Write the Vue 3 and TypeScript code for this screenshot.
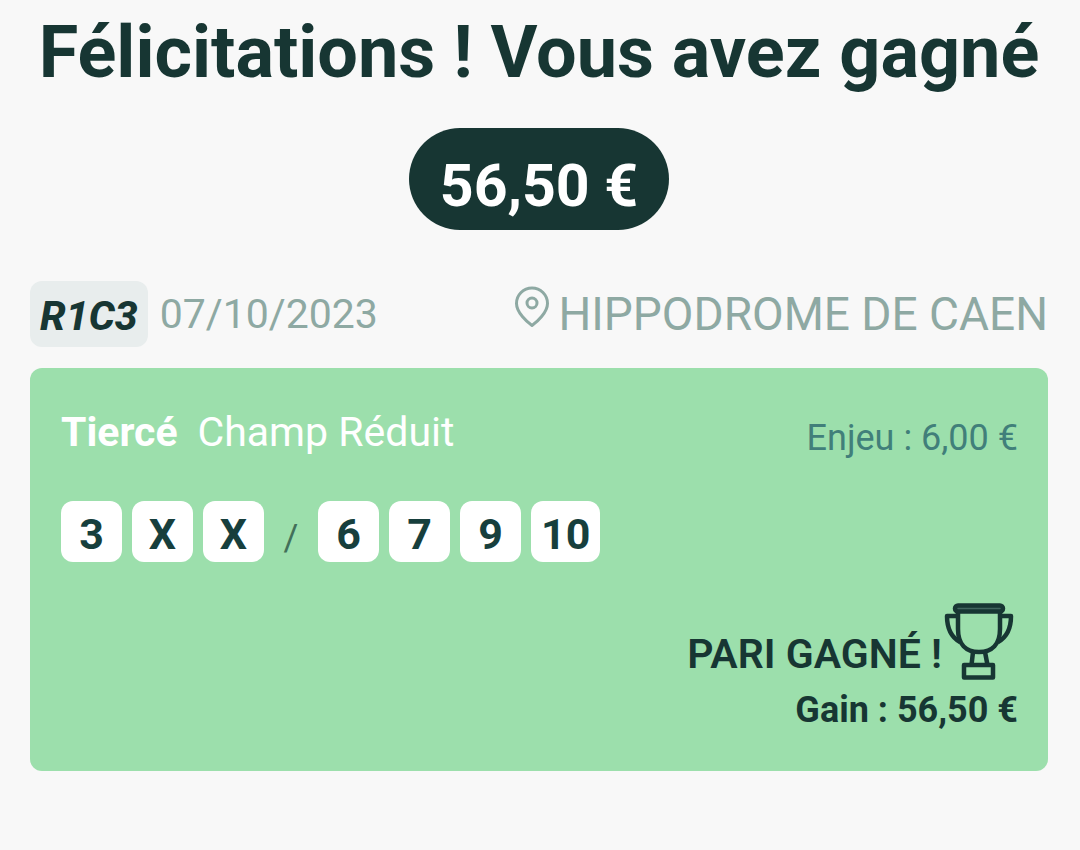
<script setup lang="ts">
interface Bet {
  race: string
  date: string
  venue: string
  kind: string
  formula: string
  stake: string
  bases: string[]
  picks: string[]
  gain: string
}

const bet: Bet = {
  race: 'R1C3',
  date: '07/10/2023',
  venue: 'HIPPODROME DE CAEN',
  kind: 'Tiercé',
  formula: 'Champ Réduit',
  stake: '6,00 €',
  bases: ['3', 'X', 'X'],
  picks: ['6', '7', '9', '10'],
  gain: '56,50 €',
}
</script>

<template>
  <main class="page">
    <h1 class="title">Félicitations ! Vous avez gagné</h1>
    <div class="amount">{{ bet.gain }}</div>

    <div class="meta">
      <span class="race">{{ bet.race }}</span>
      <time class="date" datetime="2023-10-07">{{ bet.date }}</time>
      <span class="venue">
        <svg class="pin" viewBox="0 0 36 42" fill="none" stroke="currentColor" stroke-width="3" aria-hidden="true">
          <path d="M18 39.5C13 36 2.500 26.500 2.500 17.500A15.500 15.500 0 0 1 33.500 17.500C33.500 26.500 23 36 18 39.500Z" stroke-linejoin="round" />
          <circle cx="18" cy="17" r="5" />
        </svg>
        {{ bet.venue }}
      </span>
    </div>

    <section class="card">
      <div class="head">
        <p class="bet"><strong>{{ bet.kind }}</strong><span>{{ bet.formula }}</span></p>
        <p class="stake">Enjeu : {{ bet.stake }}</p>
      </div>
      <div class="numbers">
        <span v-for="(n, i) in bet.bases" :key="'b' + i" class="num">{{ n }}</span>
        <span class="slash">/</span>
        <span v-for="n in bet.picks" :key="n" class="num">{{ n }}</span>
      </div>
      <div class="result">
        <span class="won">PARI GAGNÉ !</span>
        <svg class="cup" viewBox="0 0 70 78" fill="none" stroke="currentColor" stroke-width="4.500" stroke-linejoin="round" aria-hidden="true">
          <rect x="11" y="3.500" width="48" height="6" rx="3" fill="#41655e" />
          <path d="M14 9V27C14 42 22 50 35 50S56 42 56 27V9" />
          <path d="M14 14H3C3 27 7 35 16 40M56 14H67C67 27 63 35 54 40" />
          <path d="M29 50L27.500 63M41 50L43.500 63" />
          <rect x="20" y="63" width="29" height="12.500" />
        </svg>
      </div>
      <p class="gain">Gain : {{ bet.gain }}</p>
    </section>
  </main>
</template>

<style>
body {
  margin: 0;
  background: #f8f8f8;
}
</style>

<style scoped>
.page {
  padding: 13px 32px 80px 30px;
  color: #173633;
  font-family: Roboto, "Liberation Sans", sans-serif;
}
.title {
  margin: 0 -20px;
  font-size: 72px;
  line-height: 80px;
  font-weight: 700;
  text-align: center;
  white-space: nowrap;
}
.amount {
  width: max-content;
  margin: 35px auto 0;
  padding: 18px 31px 4px;
  border-radius: 52px;
  background: #173633;
  color: #fff;
  font-size: 59px;
  line-height: 80px;
  font-weight: 700;
}
.meta {
  display: flex;
  align-items: center;
  margin-top: 51px;
  color: #8ea9a3;
}
.race {
  padding: 4px 10px 0;
  border-radius: 12px;
  background: #e8eded;
  color: #173633;
  font-size: 41px;
  line-height: 62px;
  font-weight: 800;
  font-style: italic;
}
.date {
  margin-left: 12px;
  font-size: 41px;
}
.venue {
  display: flex;
  align-items: center;
  gap: 8px;
  margin-left: auto;
  font-size: 46px;
  line-height: 60px;
}
.pin {
  width: 36px;
  height: 42px;
  margin-bottom: 14px;
}
.card {
  margin-top: 21px;
  padding: 38px 30px 38px 31px;
  border-radius: 12px;
  background: #9cdfac;
}
.head {
  display: flex;
  justify-content: space-between;
}
.bet,
.stake,
.gain {
  margin: 0;
}
.bet {
  display: flex;
  gap: 20px;
  color: #fff;
  font-size: 41px;
  line-height: 52px;
}
.stake {
  padding-top: 8px;
  color: #417f7a;
  font-size: 36px;
  line-height: 48px;
}
.numbers {
  display: flex;
  align-items: center;
  gap: 10px;
  margin-top: 39px;
}
.num {
  box-sizing: border-box;
  min-width: 61px;
  padding: 5px 10px 0;
  border-radius: 12px;
  background: #fff;
  color: #173f3d;
  font-size: 43px;
  line-height: 56px;
  font-weight: 700;
  text-align: center;
}
.slash {
  width: 34px;
  padding-top: 12px;
  color: #42705a;
  font-size: 36px;
  line-height: 48px;
  text-align: center;
}
.result {
  display: flex;
  justify-content: flex-end;
  gap: 2px;
  margin-top: 40px;
}
.won {
  padding-top: 27px;
  font-size: 41px;
  line-height: 50px;
  font-weight: 600;
}
.cup {
  width: 70px;
  height: 78px;
  margin-right: 4px;
}
.gain {
  margin-top: 7px;
  font-size: 36px;
  line-height: 46px;
  font-weight: 700;
  text-align: right;
}
</style>
